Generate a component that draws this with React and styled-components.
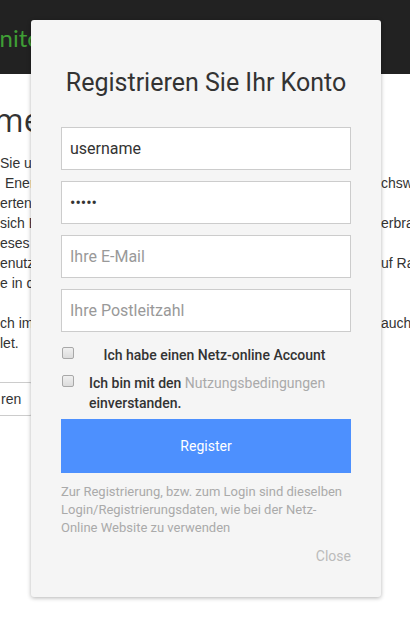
import React from "react";
import styled, { createGlobalStyle } from "styled-components";

const Global = createGlobalStyle`
  html, body { margin: 0; padding: 0; background: #fff; }
  body { width: 410px; height: 635px; overflow: hidden; font-family: "Liberation Sans", Arial, sans-serif; }
  * { box-sizing: border-box; }
`;

const Page = styled.div`
  position: relative;
  width: 410px;
  height: 635px;
  overflow: hidden;
`;

const TopBar = styled.header`
  height: 74px;
  background: #222;
  display: flex;
  align-items: center;
  overflow: hidden;
`;

const Brand = styled.span`
  font-family: Lato, "Open Sans", sans-serif;
  font-size: 24px;
  color: #3f9e35;
  margin-left: -36px;
  white-space: nowrap;
`;

const Content = styled.main`
  padding-top: 26px;
  color: #333;
`;

const Heading = styled.h1`
  margin: 0;
  font-family: "Open Sans", sans-serif;
  font-weight: 400;
  font-size: 32px;
  line-height: 40px;
  margin-left: -6px;
  color: #333;
`;

const Lines = styled.div`
  margin-top: 13px;
  font-size: 14px;
  line-height: 20px;
  color: #333;
`;

const Line = styled.div`
  display: flex;
  height: 20px;
  white-space: nowrap;
`;

const Left = styled.span`
  width: 60px;
  padding-left: ${(p) => p.$indent || 0}px;
  overflow: hidden;
`;

const Right = styled.span`
  margin-left: auto;
  width: 29px;
  overflow: hidden;
`;

const GhostButton = styled.button`
  margin-top: 29px;
  margin-left: -14px;
  height: 34px;
  padding: 0 12px 0 14px;
  border: 1px solid #ccc;
  border-radius: 4px;
  background: #fff;
  font-family: "Liberation Sans", Arial, sans-serif;
  font-size: 14px;
  color: #333;
`;

const Modal = styled.div`
  position: absolute;
  top: 20px;
  left: 31px;
  width: 350px;
  background: #f5f5f5;
  border-radius: 3px;
  box-shadow: 0 1px 4px rgba(0, 0, 0, 0.3);
  padding: 0 30px 31px;
  font-family: Roboto, "Noto Sans", sans-serif;
  display: flex;
  flex-direction: column;
`;

const Title = styled.h2`
  margin: 49px 0 30px;
  font-size: 25px;
  font-weight: 400;
  line-height: 28px;
  text-align: center;
  color: #333;
`;

const Fields = styled.div`
  display: flex;
  flex-direction: column;
  gap: 11px;
`;

const Input = styled.input`
  height: 43px;
  width: 100%;
  border: 1px solid #ccc;
  background: #fff;
  padding: 0 8px;
  font-family: Roboto, sans-serif;
  font-size: 16px;
  color: #333;
  outline: none;
  &::placeholder { color: #999; }
`;

const CheckRow = styled.label`
  display: flex;
  align-items: flex-start;
  gap: ${(p) => p.$gap}px;
  margin-top: ${(p) => p.$top}px;
  font-size: 14px;
  line-height: 20px;
  color: #333;
  font-weight: 500;
`;

const Box = styled.input`
  appearance: none;
  flex: none;
  width: 12px;
  height: 12px;
  margin: 2px 0 0 1px;
  border: 1px solid #a8a8a8;
  border-radius: 2px;
  background: linear-gradient(#f0f0f0, #dcdcdc);
`;

const CheckText = styled.span`
  flex: 1;
  text-align: ${(p) => (p.$center ? "center" : "left")};
`;

const Muted = styled.span`
  color: #aaa;
  font-weight: 400;
`;

const Submit = styled.button`
  margin-top: 6px;
  height: 54px;
  border: none;
  background: #4d90fe;
  color: #fff;
  font-family: Roboto, sans-serif;
  font-size: 14px;
`;

const Note = styled.p`
  margin: 10px 0 0;
  font-size: 13px;
  line-height: 18px;
  color: #aaa;
`;

const Close = styled.div`
  margin-top: 9px;
  text-align: right;
  font-size: 14px;
  line-height: 20px;
  color: #bbb;
`;

const lines = [
  ["Sie und", ""],
  [" Energ", "chsw", 5],
  ["erten", ""],
  ["sich E", "erbra"],
  ["eses S", ""],
  ["enutz", "uf Ra"],
  ["e in d", ""],
  ["", ""],
  ["ch im", "auch"],
  ["let.", ""],
];

export default function App() {
  return (
    <Page>
      <Global />
      <TopBar>
        <Brand>Monitor</Brand>
      </TopBar>
      <Content>
        <Heading>me</Heading>
        <Lines>
          {lines.map(([l, r, ind], i) => (
            <Line key={i}>
              <Left $indent={ind}>{l}</Left>
              <Right>{r}</Right>
            </Line>
          ))}
        </Lines>
        <GhostButton>ren</GhostButton>
      </Content>
      <Modal>
        <Title>Registrieren Sie Ihr Konto</Title>
        <Fields>
          <Input type="text" defaultValue="username" />
          <Input type="password" defaultValue="12345" />
          <Input type="email" placeholder="Ihre E-Mail" />
          <Input type="text" placeholder="Ihre Postleitzahl" />
        </Fields>
        <CheckRow $top={13} $gap={4}>
          <Box type="checkbox" />
          <CheckText $center>Ich habe einen Netz-online Account</CheckText>
        </CheckRow>
        <CheckRow $top={8} $gap={15}>
          <Box type="checkbox" />
          <CheckText>
            Ich bin mit den <Muted>Nutzungsbedingungen</Muted>
            <br />
            einverstanden.
          </CheckText>
        </CheckRow>
        <Submit>Register</Submit>
        <Note>
          Zur Registrierung, bzw. zum Login sind dieselben
          <br />
          Login/Registrierungsdaten, wie bei der Netz-
          <br />
          Online Website zu verwenden
        </Note>
        <Close>Close</Close>
      </Modal>
    </Page>
  );
}
